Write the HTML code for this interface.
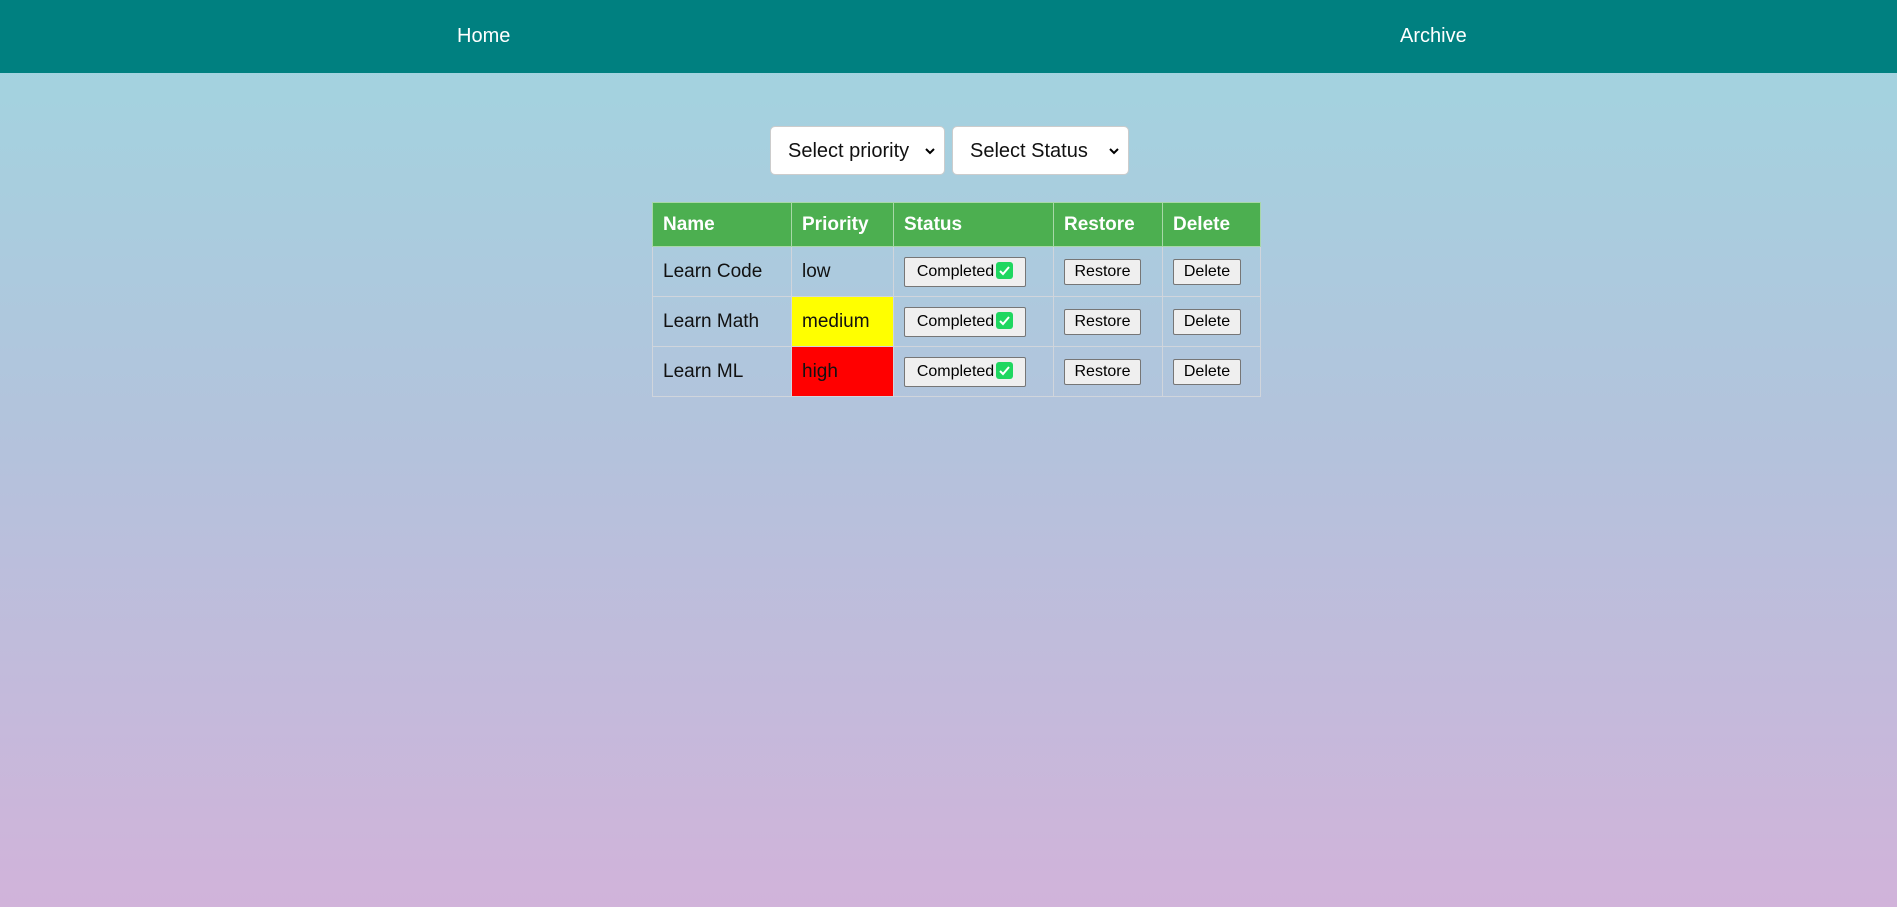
<!DOCTYPE html>
<html><head><style>
html,body{margin:0;padding:0;}
body{width:1897px;height:907px;font-family:"Liberation Sans",Arial,sans-serif;background:linear-gradient(to bottom,#a0d6e0 0%,#b4c2dc 50%,#d1b3da 100%);overflow:hidden;position:relative}
nav{position:absolute;left:0;top:0;width:1897px;height:73px;background:#008080;color:#fff;font-size:20px}
nav span{position:absolute;top:25px}
.sel{position:absolute;top:126px;height:49px;background:#fff;border:1px solid #ccc;border-radius:5px;box-sizing:border-box;font-size:20px;line-height:49px;padding-left:17px;color:#111}
.sel svg{position:absolute;right:8px;top:19px}
table{position:absolute;left:652px;top:202px;border-collapse:collapse;font-size:19px;color:#111}
td,th{border:1px solid #d0d5dc;padding:0 0 0 10px;text-align:left;height:49px;box-sizing:border-box}
th{background:#4caf50;color:#fff;font-weight:bold;height:44px;border-color:#a8d8a8}
tr.r td{height:50px}
.b{display:inline-block;background:#efefef;border:1px solid #767676;border-radius:2px;font-size:16px;padding:0;line-height:24px;height:26px;color:#000;box-sizing:border-box;text-align:center;vertical-align:middle}
.c{height:30px;line-height:28px}
.ck{display:inline-block;width:17px;height:17px;background:#1ed760;border-radius:3px;vertical-align:-3px;margin-left:2px;position:relative}
</style></head><body>
<nav><span style="left:457px">Home</span><span style="left:1400px">Archive</span></nav>
<div class="sel" style="left:770px;width:175px">Select priority<svg width="12" height="10" viewBox="0 0 12 10"><path d="M2 3l4 4 4-4" stroke="#000" stroke-width="2" fill="none"/></svg></div>
<div class="sel" style="left:952px;width:177px">Select Status<svg width="12" height="10" viewBox="0 0 12 10"><path d="M2 3l4 4 4-4" stroke="#000" stroke-width="2" fill="none"/></svg></div>
<table>
<tr><th style="width:139px">Name</th><th style="width:102px">Priority</th><th style="width:160px">Status</th><th style="width:109px">Restore</th><th style="width:98px">Delete</th></tr>
<tr class="r"><td>Learn Code</td><td>low</td><td><span class="b c" style="width:122px">Completed<span class="ck"><svg width="17" height="17" viewBox="0 0 17 17" style="position:absolute;left:0;top:0"><path d="M4 9l3 3 6-7" stroke="#fff" stroke-width="2" fill="none"/></svg></span></span></td><td><span class="b" style="width:77px">Restore</span></td><td><span class="b" style="width:68px">Delete</span></td></tr>
<tr class="r"><td>Learn Math</td><td style="background:#ff0">medium</td><td><span class="b c" style="width:122px">Completed<span class="ck"><svg width="17" height="17" viewBox="0 0 17 17" style="position:absolute;left:0;top:0"><path d="M4 9l3 3 6-7" stroke="#fff" stroke-width="2" fill="none"/></svg></span></span></td><td><span class="b" style="width:77px">Restore</span></td><td><span class="b" style="width:68px">Delete</span></td></tr>
<tr class="r"><td>Learn ML</td><td style="background:#f00">high</td><td><span class="b c" style="width:122px">Completed<span class="ck"><svg width="17" height="17" viewBox="0 0 17 17" style="position:absolute;left:0;top:0"><path d="M4 9l3 3 6-7" stroke="#fff" stroke-width="2" fill="none"/></svg></span></span></td><td><span class="b" style="width:77px">Restore</span></td><td><span class="b" style="width:68px">Delete</span></td></tr>
</table>
</body></html>
